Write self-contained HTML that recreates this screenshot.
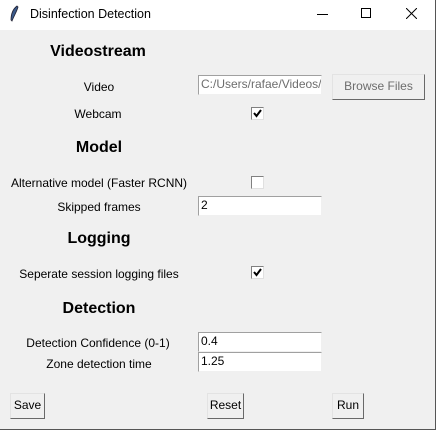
<!DOCTYPE html>
<html><head><meta charset="utf-8"><style>
*{margin:0;padding:0;box-sizing:border-box}
body{width:436px;height:430px;background:#f0f0f0;position:relative;overflow:hidden;font-family:"Liberation Sans",Arial,sans-serif;color:#000}
.tb{position:absolute;left:0;top:0;width:436px;height:30px;background:#fff}
.t{position:absolute;white-space:nowrap;font-size:12px;transform:translate(-50%,-50%)}
.h{font-weight:bold;font-size:16px}
.e{position:absolute;background:#fff;border-top:1px solid #a0a0a0;border-left:1px solid #a0a0a0;border-right:1px solid #f0f0f0;border-bottom:1px solid #f0f0f0;font-size:12px;line-height:17px;padding-left:2px;width:124px;height:20px;white-space:nowrap;overflow:hidden}
.cb{position:absolute;width:13px;height:13px;background:#fff;border-top:1px solid #808080;border-left:1px solid #808080;border-right:1px solid #e0e0e0;border-bottom:1px solid #e0e0e0}
.cb svg{position:absolute;left:1px;top:1px}
.b{position:absolute;background:#f0f0f0;border:1px solid;border-color:#e3e3e3 #696969 #696969 #e3e3e3;font-size:12px;text-align:center;white-space:nowrap;overflow:visible}
</style></head><body>
<div class="tb">
<svg style="position:absolute;left:9px;top:5px" width="10" height="18" viewBox="0 0 10 18"><path d="M8 1 C4 4 2 9 2 15 L3 16 C5 11 8 6 9 2 Z" fill="#3a5a8a" stroke="#223" stroke-width="0.8"/></svg>
<div style="position:absolute;left:30px;top:7px;font-size:12.5px">Disinfection Detection</div>
<div style="position:absolute;left:317px;top:14px;width:11px;height:1px;background:#000"></div>
<div style="position:absolute;left:361px;top:8px;width:10px;height:10px;border:1px solid #000"></div>
<svg style="position:absolute;left:406px;top:8px" width="11" height="11"><path d="M0 0L11 11M11 0L0 11" stroke="#000" stroke-width="1"/></svg>
</div>
<div style="position:absolute;right:0;top:0;width:1px;height:430px;background:#555"></div>
<div style="position:absolute;left:0;bottom:0;width:436px;height:1px;background:#555"></div>

<div class="t h" style="left:98px;top:52px">Videostream</div>
<div class="t" style="left:99px;top:87px">Video</div>
<div class="e" style="left:198px;top:75px;color:#6d6d6d;width:124px">C:/Users/rafae/Videos/</div>
<div class="b" style="left:332px;top:74px;width:93px;height:26px;line-height:23px;color:#6d6d6d">Browse Files</div>
<div class="t" style="left:98px;top:114px">Webcam</div>
<div class="cb" style="left:251px;top:107px"><svg width="9" height="9"><path d="M1 4L3.5 7L8 1" stroke="#000" stroke-width="2" fill="none"/></svg></div>

<div class="t h" style="left:99px;top:148px">Model</div>
<div class="t" style="left:99px;top:183px">Alternative model (Faster RCNN)</div>
<div class="cb" style="left:251px;top:176px"></div>
<div class="t" style="left:99px;top:207px">Skipped frames</div>
<div class="e" style="left:198px;top:196px">2</div>

<div class="t h" style="left:99px;top:239px">Logging</div>
<div class="t" style="left:99px;top:274px">Seperate session logging files</div>
<div class="cb" style="left:251px;top:266px"><svg width="9" height="9"><path d="M1 4L3.5 7L8 1" stroke="#000" stroke-width="2" fill="none"/></svg></div>

<div class="t h" style="left:99px;top:309px">Detection</div>
<div class="t" style="left:98px;top:343px">Detection Confidence (0-1)</div>
<div class="e" style="left:198px;top:332px">0.4</div>
<div class="t" style="left:99px;top:364px">Zone detection time</div>
<div class="e" style="left:198px;top:352px">1.25</div>

<div class="b" style="left:10px;top:393px;width:35px;height:26px;line-height:23px">Save</div>
<div class="b" style="left:207px;top:393px;width:37px;height:26px;line-height:23px">Reset</div>
<div class="b" style="left:332px;top:393px;width:32px;height:26px;line-height:23px">Run</div>
</body></html>
